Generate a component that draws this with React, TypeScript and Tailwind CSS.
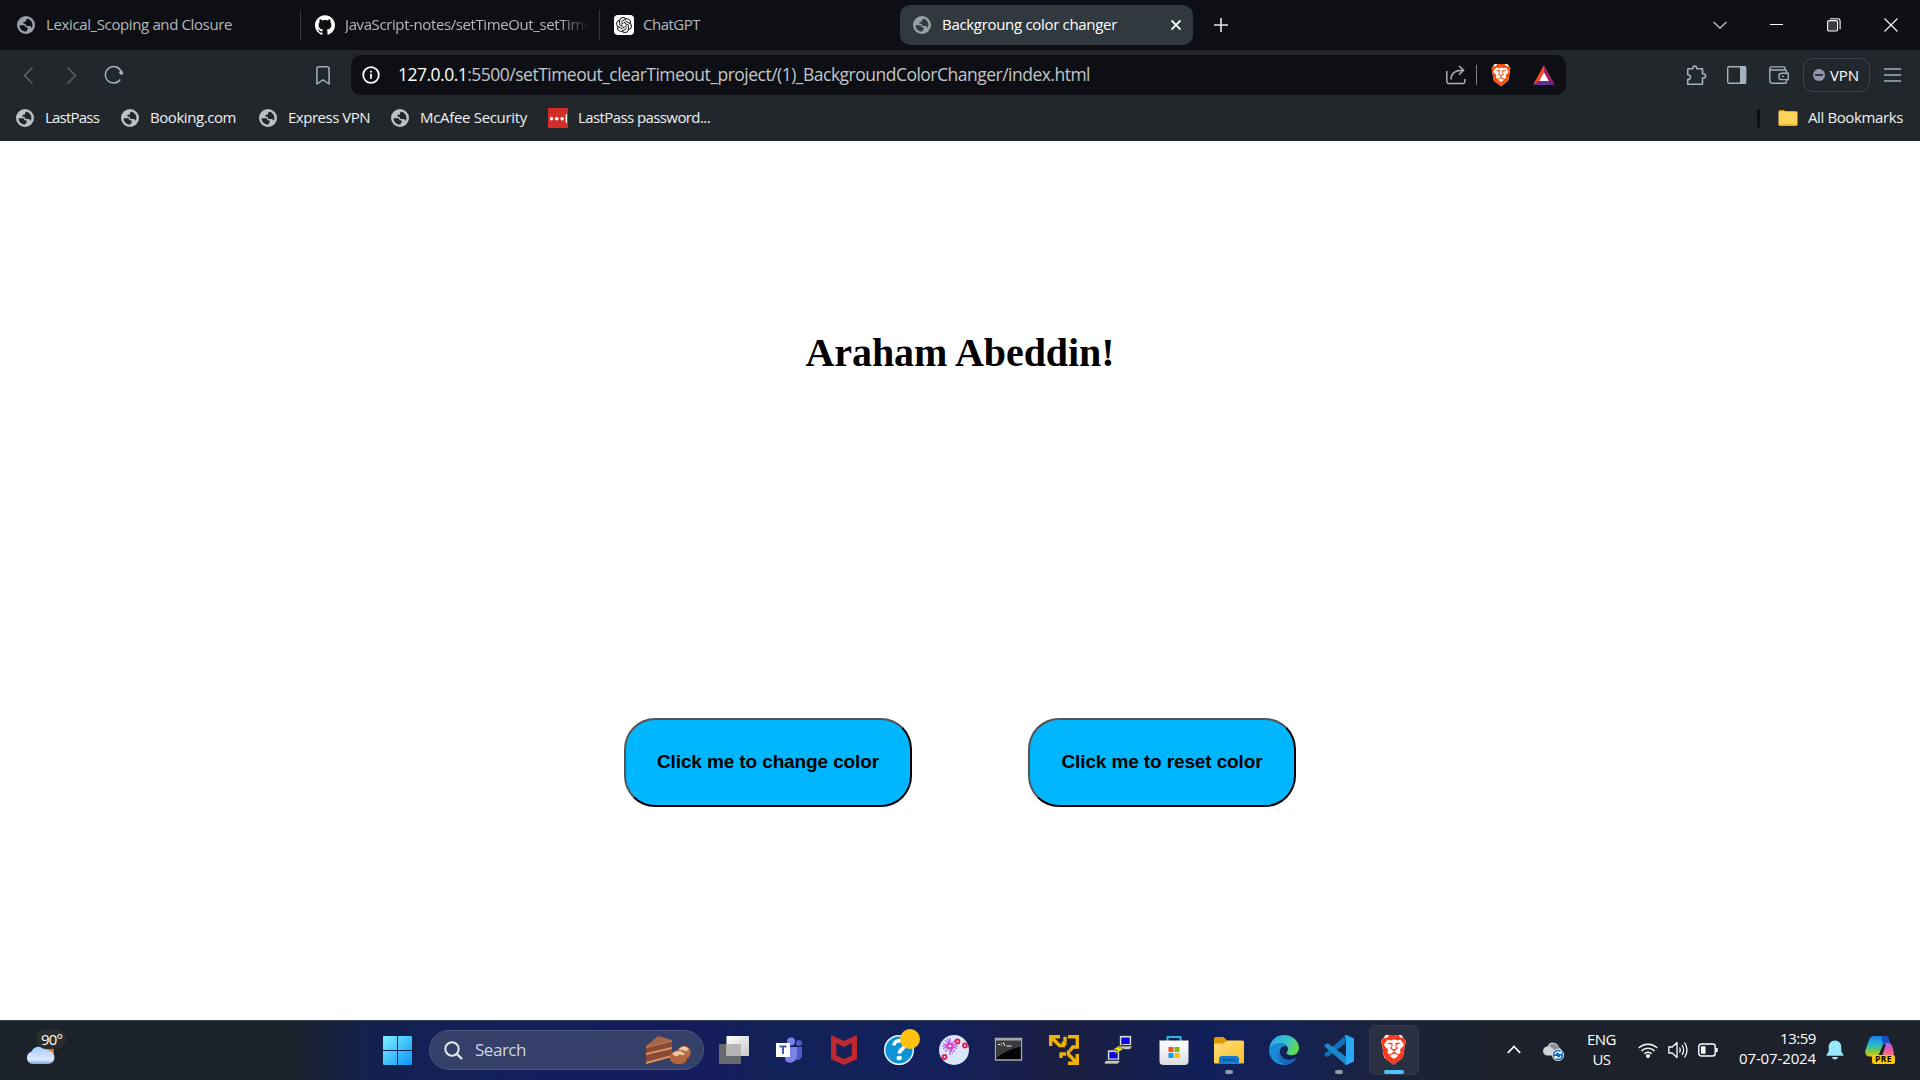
import { useLayoutEffect, useRef } from "react";
import type { ReactNode } from "react";
import { SiBrave, SiGithub, SiLastpass, SiMcafee, SiOpenai } from "react-icons/si";

/* Text set to an exact width by spreading the difference over its letters. */
function Fit({ w, className = "", children }: { w: number; className?: string; children: ReactNode }) {
  const ref = useRef<HTMLSpanElement>(null);
  useLayoutEffect(() => {
    const el = ref.current;
    if (!el) return;
    el.style.letterSpacing = "0px";
    const n = (el.textContent || "").length;
    const natural = el.getBoundingClientRect().width;
    el.style.letterSpacing = (w - natural) / n + "px";
  }, [w]);
  return (
    <span className={"block shrink-0 whitespace-nowrap " + className} style={{ width: w }}>
      <span ref={ref} className="inline-block">{children}</span>
    </span>
  );
}

function Globe({ className = "" }: { className?: string }) {
  return (
    <svg viewBox="0 0 18 18" className={"size-[18px] shrink-0 " + className}>
      <circle cx="9" cy="9" r="9" fill="currentColor" />
      <path
        className="fill-[#22272a]"
        transform="translate(.7 .7) scale(.92)"
        d="M2 9.2h4.6c1 0 1.7.7 1.7 1.6v.7h1.2c.8 0 1.4.6 1.4 1.4v.4c0 .7-.5 1.2-1.1 1.3l-.2 1.5C5.300 16.300 2 13.200 2 9.200zM10.600 2.200C13.700 2.800 16 5.600 16 9c0 1.200-.3 2.300-.8 3.200l-1-1.500c-.3-.5-.8-.7-1.300-.7H10.200c-.9 0-1.500-.6-1.500-1.400V7.700H7.300c-.7 0-1.200-.5-1.200-1.100 0-.7.5-1.100 1.200-1.100h.5c.7 0 1.200-.5 1.200-1.200 0-1 .7-1.800 1.600-2.100z"
      />
    </svg>
  );
}

function TabBar() {
  return (
    <div className="flex h-[50px] items-center bg-[#0d0f14] text-[15px] leading-[22px] text-[#b4b8bc]">
      <div className="flex w-[301px] items-center border-r border-[#35373b] pl-[17px] h-[30px]">
        <Globe className="text-[#9aa0a6] [&>path]:fill-[#0d0f14]" />
        <Fit w={186} className="ml-[11px] pb-[2px]">Lexical_Scoping and Closure</Fit>
      </div>
      <div className="flex h-[30px] w-[299px] items-center border-r border-[#35373b] pl-[14px]">
        <SiGithub className="size-5 shrink-0 text-white" />
        <div className="ml-[10px] w-[244px] overflow-hidden [mask-image:linear-gradient(to_right,black_88%,transparent)]">
          <Fit w={247} className="pb-[2px]">JavaScript-notes/setTimeOut_setTime</Fit>
        </div>
      </div>
      <div className="flex w-[300px] items-center pl-[14px]">
        <div className="flex size-5 items-center justify-center rounded bg-white">
          <SiOpenai className="size-4 text-[#202123]" />
        </div>
        <Fit w={57} className="ml-[9px] pb-[2px]">ChatGPT</Fit>
      </div>
      <div className="flex h-10 w-[293px] items-center rounded-[10px] bg-[#31383e] pl-[13px] text-white">
        <Globe className="text-[#9aa0a6] [&>path]:fill-[#31383e]" />
        <Fit w={175} className="ml-[11px] pb-[2px]">Backgroung color changer</Fit>
        <svg viewBox="0 0 10 10" className="ml-[54px] size-[10px]" stroke="white" strokeWidth="1.9">
          <path d="M.5.5l9 9M9.500.5l-9 9" />
        </svg>
      </div>
      <svg viewBox="0 0 14 14" className="ml-[21px] size-[14px]" stroke="#e3e5e8" strokeWidth="1.6">
        <path d="M7 0v14M0 7h14" />
      </svg>
      <div className="ml-auto flex items-center pr-[22px] pb-px">
        <svg viewBox="0 0 14 8" className="h-2 w-[14px]" fill="none" stroke="#d8dadc" strokeWidth="1.1"><path d="M.5.8L7 7.200l6.500-6.400" /></svg>
        <div className="ml-[43px] h-px w-[13px] bg-white" />
        <svg viewBox="0 0 14 14" className="ml-[44px] size-[14px]" fill="none" stroke="white" strokeWidth="1.1">
          <rect x=".6" y="2.600" width="10" height="10.400" rx="1.500" fill="#3a3c40" />
          <path d="M3 .7h7.500a2.600 2.600 0 012.600 2.600v8" />
        </svg>
        <svg viewBox="0 0 14 14" className="ml-[43px] size-[14px]" stroke="white" strokeWidth="1.100"><path d="M.5.5l13 13M13.500.5l-13 13" /></svg>
      </div>
    </div>
  );
}

function Toolbar() {
  return (
    <div className="flex h-[50px] items-center text-[#a3b2bc]">
      <svg viewBox="0 0 9 17" className="ml-[24px] h-[17px] w-[9px]" fill="none" stroke="#62696e" strokeWidth="1.3"><path d="M8.500.5l-8 8 8 8" /></svg>
      <svg viewBox="0 0 9 17" className="ml-[34px] h-[17px] w-[9px]" fill="none" stroke="#62696e" strokeWidth="1.300"><path d="M.5.5l8 8-8 8" /></svg>
      <svg viewBox="0 0 20 20" className="ml-[28px] size-5" fill="none" stroke="currentColor" strokeWidth="1.500">
        <path d="M17.300 7A8.200 8.200 0 1016.300 14.500" />
        <circle cx="17.200" cy="7.800" r="2" fill="currentColor" stroke="none" />
      </svg>
      <svg viewBox="0 0 14 19" className="ml-[192px] h-[19px] w-[14px]" fill="none" stroke="currentColor" strokeWidth="1.500" strokeLinejoin="round">
        <path d="M.9 3A2.200 2.200 0 013.100.8h7.800A2.200 2.200 0 0113.100 3v15L7 13.800.9 18z" />
      </svg>
      <div className="ml-[21px] flex h-10 w-[1215px] items-center rounded-[10px] bg-[#0d0f14]">
        <svg viewBox="0 0 18 18" className="ml-[11px] size-[18px]" fill="none" stroke="white" strokeWidth="1.800">
          <circle cx="9" cy="9" r="7.800" /><path d="M9 7.800v5M9 4.700v1.900" />
        </svg>
        <Fit w={692} className="ml-[18px] mr-px pb-px text-[17.5px] text-[#c3c6c9]">
          <span className="text-white">127.0.0.1</span>:5500/setTimeout_clearTimeout_project/(1)_BackgroundColorChanger/index.html
        </Fit>
        <svg viewBox="0 0 20 20" className="ml-[355px] size-5" fill="none" stroke="#a9afb3" strokeWidth="1.500">
          <path d="M.8 6v10.500a2 2 0 002 2h14a2 2 0 002-2V14M5 14.500C5 8.500 9 5.300 17 5.300M13 1l4.600 4.300-4.600 4.300" />
        </svg>
        <div className="ml-[10px] h-5 w-px bg-[#7d8286]" />
        <div className="ml-[14px] flex h-[23px] w-5 items-center justify-center bg-white [clip-path:polygon(20%_0,80%_0,97%_20%,86%_75%,50%_99%,14%_75%,3%_20%)]">
          <SiBrave className="h-[23px] w-[24px] shrink-0 text-[#fb4f0f]" />
        </div>
        <svg viewBox="0 0 22 20" className="ml-[22px] h-5 w-[22px]">
          <path d="M11 0L0 20l6.500-4L11 8z" fill="#ff4724" />
          <path d="M11 0l11 20-6.500-4L11 8z" fill="#9e1f63" />
          <path d="M0 20h22l-6.500-4h-9z" fill="#662d91" />
          <path d="M11 7.500L15.800 16H6.200z" fill="white" />
        </svg>
      </div>
      <svg viewBox="0 0 21 21" className="ml-[120px] size-[21px]" fill="none" stroke="currentColor" strokeWidth="1.600" strokeLinejoin="round">
        <path d="M2.200 3.700h4.600c0-3.600 4-3.600 4 0h5.700v5.100c4.200 0 4.200 4.200 0 4.200v6.200H1.700v-4.600c3.600.3 3.600-5.100 0-4.800V4.200z" />
      </svg>
      <svg viewBox="0 0 20 18" className="ml-[20px] h-[18px] w-5"><rect x=".7" y=".7" width="18" height="16.600" rx="1.500" fill="none" stroke="currentColor" strokeWidth="1.400" /><path d="M13 0h6v18h-6z" fill="currentColor" /></svg>
      <svg viewBox="0 0 20 18" className="ml-[22px] h-[18px] w-5" fill="none" stroke="currentColor" strokeWidth="1.400">
        <path d="M17.500 7V5.500a1.500 1.500 0 00-1.500-1.500H2.500C.3 4 .3.900 2.500.9H14.500a1.500 1.500 0 011.500 1.500V4M.8 2.500v12.700a2 2 0 002 2H16a1.500 1.500 0 001.500-1.500v-2M19.200 7.200H13a2 2 0 000 6.400h6.200zM13 10.400h2" />
      </svg>
      <div className="ml-[14px] flex h-[34px] w-[67px] items-center rounded-[10px] border border-[#3d474d] pl-[9px] text-white">
        <div className="flex size-3 items-center justify-center rounded-full bg-[#9497ae]"><div className="h-[1.500px] w-2 bg-[#30354a]" /></div>
        <Fit w={29} className="ml-[5px] text-[15px]">VPN</Fit>
      </div>
      <svg viewBox="0 0 17 14" className="ml-[14px] h-[14px] w-[17px]" stroke="currentColor" strokeWidth="1.300"><path d="M0 1h17M0 7h17M0 13h17" /></svg>
    </div>
  );
}

function BookmarksBar() {
  return (
    <div className="flex h-[41px] items-center pb-[5px] text-[15px] leading-5 text-[#eef0f1] [&>span]:pb-[2px]">
      <Globe className="ml-4 text-[#bdc1c6]" />
      <Fit w={54} className="ml-[11px]">LastPass</Fit>
      <Globe className="ml-[22px] text-[#bdc1c6]" />
      <Fit w={86} className="ml-[11px]">Booking.com</Fit>
      <Globe className="ml-[23px] text-[#bdc1c6]" />
      <Fit w={82} className="ml-[11px]">Express VPN</Fit>
      <Globe className="ml-[21px] text-[#bdc1c6]" />
      <Fit w={107} className="ml-[11px]">McAfee Security</Fit>
      <div className="ml-[21px] flex size-5 items-center justify-center bg-[#d32d27]"><SiLastpass className="size-[17px] text-white" stroke="white" strokeWidth="1" /></div>
      <Fit w={132} className="ml-[10px]">LastPass password...</Fit>
      <div className="ml-auto h-[19px] w-[3px] rounded-full bg-[#0d0f14]" />
      <svg viewBox="0 0 20 16" className="ml-[18px] h-4 w-5"><path d="M.5 1.500Q.5 0 2 0h4l2 2H.5z" fill="#d69a00" /><rect x=".5" y="1.300" width="19" height="14.500" rx="1.500" fill="#ffd35a" /><path d="M1 15h18" stroke="#eab22b" strokeWidth="1.500" /></svg>
      <Fit w={95} className="ml-[10px] mr-[17px]">All Bookmarks</Fit>
    </div>
  );
}

function Page() {
  return (
    <main className="flex h-[879px] flex-col items-center bg-white text-black">
      <h1 className="mt-[189px] font-['Liberation_Serif',serif] text-[40px] leading-[46px] font-bold">
        <Fit w={309}>Araham Abeddin!</Fit>
      </h1>
      <div className="mt-[342px] flex gap-[116px] font-['Liberation_Sans',sans-serif] text-[19px] font-bold">
        <button className="flex h-[89px] w-[288px] items-center justify-center rounded-[31px] border-2 border-black bg-[#00b7ff] [border-style:outset]">
          <Fit w={222}>Click me to change color</Fit>
        </button>
        <button className="flex h-[89px] w-[268px] items-center justify-center rounded-[31px] border-2 border-black bg-[#00b7ff] [border-style:outset]">
          <Fit w={201}>Click me to reset color</Fit>
        </button>
      </div>
    </main>
  );
}

function App30({ children }: { children: ReactNode }) {
  return <svg viewBox="0 0 30 30" className="size-[30px]">{children}</svg>;
}

function Slot({ children, mark = false }: { children: ReactNode; mark?: boolean }) {
  return (
    <div className="flex h-[60px] w-[55px] shrink-0 flex-col items-center pt-[15px]">
      {children}
      {mark && <div className="mt-[5px] h-1 w-2 rounded-full bg-[#9699a6]" />}
    </div>
  );
}

function Weather() {
  return (
    <div className="relative ml-[25px] h-[60px] w-[41px]">
      <svg viewBox="0 0 31 22" className="absolute top-[23px] left-0 h-[22px] w-[31px]">
        <defs><linearGradient id="cl" x2="0" y2="1"><stop stopColor="#a9c8fb" /><stop offset=".75" stopColor="#dbe9ff" /><stop offset="1" stopColor="#7fa3e8" /></linearGradient></defs>
        <circle cx="24" cy="8" r="5" fill="#f7730c" />
        <path d="M7 21a6.500 6.500 0 01-.5-12.500A8 8 0 0120 6.500a7 7 0 014.500 1.300A6.800 6.800 0 0124 21z" fill="url(#cl)" />
      </svg>
      <div className="absolute top-[9px] left-[11px] flex h-5 w-[30px] items-center rounded-full bg-[#2c2c2c] pl-[5px] text-[15px] leading-5 text-white">
        <Fit w={21}>90°</Fit>
      </div>
    </div>
  );
}

function Search() {
  return (
    <div className="mx-[2px] flex h-10 w-[275px] items-center rounded-full border border-[#4a5580] bg-[#354069]">
      <svg viewBox="0 0 19 19" className="ml-[14px] size-[19px]" fill="none" stroke="#e4e7ef" strokeWidth="2"><circle cx="8" cy="8" r="6.700" /><path d="M12.800 12.800l5.200 5.200" strokeWidth="2.400" /></svg>
      <Fit w={51} className="ml-[12px] text-[17px] text-[#cfd4e2]">Search</Fit>
      <svg viewBox="0 0 46 30" className="ml-[119px] h-[30px] w-[46px]">
        <path d="M1 11L13 1l14 4-26 7z" fill="#a8654a" />
        <path d="M1 11.500L27 5v17L1 29z" fill="#8a4a36" />
        <path d="M1 18l26-6v2L1 20zM1 27l26-7v2L1 29z" fill="#dc9367" />
        <path d="M1 11.500L27 5v1.500L1 13z" fill="#c07a58" />
        <circle cx="39" cy="17.500" r="6.800" fill="#b36c48" /><path d="M34 14q5-5 10 0l-3 2.500-3-1.500-3 1z" fill="#efc6a6" />
        <path d="M25 23a8.500 8 0 0117 0q0 6-8.500 6T25 23z" fill="#b4663f" /><path d="M27 19q6.500-6 13 0l-2 1.500-3-1-4 2-2-1.500z" fill="#f0c8a8" />
      </svg>
    </div>
  );
}

function Laptop({ x, y }: { x: number; y: number }) {
  return (
    <g transform={`translate(${x} ${y})`}>
      <path d="M3 0h12v10H3z" fill="#d9d9d9" stroke="#222" strokeWidth=".7" />
      <path d="M4.800 2h8.400v6.500H4.800z" fill="#0a0ae0" />
      <path d="M1.500 10.500H16L13.500 14H0v-1.500z" fill="#c9c9c9" stroke="#222" strokeWidth=".7" />
    </g>
  );
}

function Apps() {
  return (
    <>
      <Slot>
        <App30>
          <defs><linearGradient id="tv" x2="1" y2="1"><stop stopColor="#fff" /><stop offset="1" stopColor="#c8c8c8" /></linearGradient></defs>
          <path d="M0 9h22v20H0z" fill="#68696c" /><rect x="7.500" y="1" width="22.500" height="20" rx=".6" fill="url(#tv)" /><path d="M7.500 9H22v12H7.500z" fill="#b5b5b5" />
        </App30>
      </Slot>
      <Slot>
        <App30>
          <circle cx="17" cy="6.500" r="4" fill="#7b83eb" /><circle cx="25" cy="8" r="3" fill="#5059c9" />
          <path d="M19 12h9v8a4.500 4.500 0 01-9 1z" fill="#5059c9" /><path d="M10 12h13v9a7 7 0 01-11.500 5z" fill="#7b83eb" />
          <path d="M2 8h14v14H2z" fill="#fff" /><path d="M5.500 11.500h7M9 11.500v7.500" stroke="#4b53bc" strokeWidth="2" />
        </App30>
      </Slot>
      <Slot><SiMcafee className="h-[30px] w-[30px] text-[#c0282d]" /></Slot>
      <Slot>
        <svg viewBox="0 -6 36 36" className="-mt-[6px] ml-[6px] size-9">
          <circle cx="15" cy="15" r="14.300" fill="#0c95d6" stroke="#e8f5fc" strokeWidth="1.500" />
          <path d="M10 10.500c0-6.500 11-6.500 10.500 0-.3 4-5.200 3.500-5.200 8" fill="none" stroke="#fff" strokeWidth="3.600" /><ellipse cx="15.200" cy="23" rx="2.700" ry="2.200" fill="#fff" />
          <circle cx="26" cy="4" r="10" fill="#ffc20f" />
        </svg>
      </Slot>
      <Slot>
        <App30>
          <circle cx="15" cy="15" r="15" fill="#d9e6f8" />
          <path d="M11 3v17M3.500 11h15M6 5l10 12M16 5L6 17M8.500 3.500l5 15M4 8.500l14 5M4 13.500l14-5" stroke="#a42cf0" strokeWidth=".9" />
          <circle cx="11" cy="11" r="3.500" fill="#f03bb8" /><circle cx="11" cy="11" r="1.300" fill="#fff" />
          <g fill="#fff" stroke="#e01f52" strokeWidth="2"><circle cx="18.500" cy="6.500" r="1.900" /><circle cx="26" cy="10.500" r="1.900" /><circle cx="5.500" cy="22" r="1.900" /></g>
        </App30>
      </Slot>
      <Slot>
        <App30>
          <path d="M1.500 3.500h26v21.500h-26z" fill="#050505" stroke="#a4a8ad" strokeWidth="1.300" /><path d="M2 4h25v8Q15 13 2 23z" fill="#3c3c3f" /><path d="M2 4h25v1.500H2z" fill="#a4a8ad" />
          <path d="M4 9.500h2.200M7.500 8v.8M7.500 10v.8M9 7.500l2 3M12.500 11h5" stroke="#eee" strokeWidth="1.100" />
        </App30>
      </Slot>
      <Slot>
        <App30>
          <g fill="none" stroke="#edb20a" strokeWidth="3.400">
            <path d="M1.700 11V1.700H11M3 3l7.500 7.500h4V6.500M14.500 8.500h3" />
            <path d="M19 1.700h9.300V9M16 1.700v5M28.300 1.700V12h-4.500l-3 4" />
            <path d="M19 28.300h9.300V19M27 27l-7.500-7.500M19.500 15.500v5" />
            <path d="M17 19h-5v4" />
          </g>
        </App30>
      </Slot>
      <Slot>
        <App30>
          <Laptop x={12.5} y={0.5} /><Laptop x={0.5} y={15} />
          <path d="M19 9L8.500 14.500l5 .5L10.500 19.500 20 13.500l-5-.5z" fill="#f5f50a" stroke="#333" strokeWidth=".5" />
        </App30>
      </Slot>
      <Slot>
        <App30>
          <defs><linearGradient id="st" x2="0" y2="1"><stop stopColor="#fff" /><stop offset="1" stopColor="#dcdde0" /></linearGradient></defs>
          <path d="M8.500 7V2h13v5" fill="none" stroke="#2cb1f0" strokeWidth="2" />
          <path d="M.5 5.500h29V26a4 4 0 01-4 4h-21a4 4 0 01-4-4z" fill="url(#st)" />
          <path d="M9.500 12h5v5h-5z" fill="#f25022" /><path d="M15.500 12h5v5h-5z" fill="#7fba00" /><path d="M9.500 18h5v5h-5z" fill="#00a4ef" /><path d="M15.500 18h5v5h-5z" fill="#ffb900" />
        </App30>
      </Slot>
      <Slot mark>
        <App30>
          <defs><linearGradient id="fo" x2="1" y2="1"><stop stopColor="#ffdf7a" /><stop offset="1" stopColor="#fcbf28" /></linearGradient></defs>
          <path d="M0 4q0-2 2-2h7.500L13 5.500V10H0z" fill="#dc9a09" /><path d="M0 8.500h9.500L13 5.500h15.500A1.500 1.500 0 0130 7v20.500q0 1-1 1H1q-1 0-1-1z" fill="url(#fo)" />
          <path d="M5 28.500V24q0-3 3-3h14q3 0 3 3v4.500z" fill="#0f7ad0" /><path d="M8.500 25h13" stroke="#074f8e" strokeWidth="1.200" />
        </App30>
      </Slot>
      <Slot>
        <App30>
          <defs>
            <linearGradient id="e1" x1="0" y1=".2" x2="1" y2=".5"><stop stopColor="#2aa6e8" /><stop offset=".55" stopColor="#35c1cd" /><stop offset="1" stopColor="#62dc4c" /></linearGradient>
            <linearGradient id="e2" x2="0" y2="1"><stop stopColor="#1b7fcf" /><stop offset="1" stopColor="#1a5fb4" /></linearGradient>
          </defs>
          <path d="M.2 14C.8 6 7 0 15 0c9 0 15 6.500 15 12.800 0 4.500-3.200 7.400-7.200 7.400-3.500 0-5.300-1.200-5.300-2.300 0-.8 1.500-1.400 1.500-3.900C19 11 16 8.500 11.500 8.500 6 8.500 2 11 .2 14z" fill="url(#e1)" />
          <path d="M.1 14.500C1.500 10.500 6 8.300 11 8.500c3 .1 5 1 6.500 2.500-4-.5-6.700 2-6.700 5.500 0 5 4.200 8.500 9.200 8.500 3.500 0 6-1.200 7.500-2.500C25 27 20.500 30 15 30 6 30-.5 22.500.1 14.500z" fill="#1b8ad6" />
          <path d="M9 14.500c-3 8 3 15 9 15.200 4-.7 7.500-3.500 9.500-7.200-2 1.700-4.500 2.500-7.500 2.500-5 0-9.200-3.500-9.200-8.500 0-1 .2-2 .6-2.700z" fill="url(#e2)" />
        </App30>
      </Slot>
      <Slot mark>
        <App30>
          <path d="M22 0l-1 8.500L3.500 22 .5 20.500V19z" fill="#1272b6" /><path d="M.5 10L3.500 8 22 21.500V30L.5 11.500z" fill="#1b86cc" /><path d="M20.500.5L22.500 0 30 3.500v23L22.500 30l-2-.5q1.500-1 1.500-2.500V3q0-1.500-1.500-2.500z" fill="#2aa7f2" />
        </App30>
      </Slot>
      <div className="flex h-[60px] w-[55px] shrink-0 justify-center pt-[5px]">
        <div className="flex h-[50px] w-[50px] flex-col items-center rounded-md border border-[#33384c] bg-[#2a2f41] pt-[9px]">
          <div className="flex h-[30px] w-[26px] items-center justify-center bg-white [clip-path:polygon(20%_0,80%_0,97%_20%,86%_75%,50%_99%,14%_75%,3%_20%)]">
            <SiBrave className="size-[30px] shrink-0 text-[#fa3a1c]" />
          </div>
          <div className="mt-[5px] h-1 w-5 rounded-full bg-[#4cc2ff]" />
        </div>
      </div>
    </>
  );
}

function Tray() {
  return (
    <div className="ml-auto flex h-[60px] items-center pb-px text-[15px] leading-5 text-white">
      <svg viewBox="0 0 14 9" className="h-[9px] w-[14px]" fill="none" stroke="white" strokeWidth="1.800"><path d="M.8 8L7 1.500 13.200 8" /></svg>
      <svg viewBox="0 0 21 19" className="mt-[4px] ml-[22px] h-[19px] w-[21px]">
        <path d="M4.500 13.500a4.500 4.500 0 010-9A6 6 0 0116 5.500a4.500 4.500 0 01.500 8z" fill="#d0d2d5" /><path d="M6 3.500a6 6 0 0110 2l.5 3-4 .5z" fill="#8d9094" />
        <circle cx="15" cy="13" r="5.700" fill="#1067b8" stroke="#fff" strokeWidth=".8" />
        <path d="M11.800 12.500a3.300 3.300 0 016-1.200M18.200 13.500a3.300 3.300 0 01-6 1.200M18 9v2.400h-2.400M12 17v-2.400h2.400" fill="none" stroke="#fff" strokeWidth="1.200" />
      </svg>
      <div className="ml-[23px] flex flex-col items-center pb-px">
        <Fit w={29}>ENG</Fit><Fit w={18}>US</Fit>
      </div>
      <svg viewBox="0 0 20 16" className="ml-[22px] h-4 w-5" fill="none" stroke="white" strokeWidth="1.500">
        <path d="M.8 6a13 13 0 0118.400 0" /><path d="M3.500 9a9.200 9.200 0 0113 0" /><path d="M6.300 11.800a5.200 5.200 0 017.400 0" /><circle cx="10" cy="14" r="1.300" fill="white" />
      </svg>
      <svg viewBox="0 0 20 18" className="ml-[10px] h-[18px] w-5" fill="none" stroke="white" strokeWidth="1.300">
        <path d="M.8 6h3.400l4.800-4.500v15L4.200 12H.8z" strokeLinejoin="round" /><path d="M11.500 6.500q1.500 2.500 0 5M14 4q3.300 5 0 10M16.500 1.500q5 7.500 0 15" />
      </svg>
      <svg viewBox="0 0 20 14" className="ml-[10px] h-[14px] w-5" fill="none" stroke="white" strokeWidth="1.400">
        <rect x=".8" y="1" width="16.400" height="12" rx="2.500" /><path d="M3 3.300h4.500v7.400H3z" fill="white" stroke="none" /><path d="M18.800 5v4" strokeWidth="1.800" />
      </svg>
      <div className="ml-[21px] flex flex-col items-end pb-[3px]">
        <Fit w={36}>13:59</Fit><Fit w={77}>07-07-2024</Fit>
      </div>
      <svg viewBox="0 0 18 20" className="ml-[10px] h-5 w-[18px]" fill="#97e7fd"><path d="M9 .5c4 0 6.300 3 6.300 6.500v4.500L17.500 15v.8H.5V15l2.200-3.500V7C2.700 3.500 5 .5 9 .5zM6 17h6q-.5 2.500-3 2.500T6 17z" /></svg>
      <div className="relative mr-[24px] ml-[21px] h-[30px] w-[31px]">
        <svg viewBox="0 0 30 30" className="size-[30px]">
          <defs>
            <linearGradient id="c1" x2="0" y2="1"><stop stopColor="#1b7de8" /><stop offset=".4" stopColor="#22b5d6" /><stop offset=".75" stopColor="#7bc83c" /><stop offset="1" stopColor="#f0c31c" /></linearGradient>
            <linearGradient id="c2" x2="0" y2="1"><stop stopColor="#a55cf5" /><stop offset=".5" stopColor="#ee5a9d" /><stop offset="1" stopColor="#fb8a4c" /></linearGradient>
          </defs>
          <path d="M20 8h3.500c2 0 3 1 3.800 3.500.8 2.700 1.500 4 1.500 6.500 0 3-3 5-6 5H13l3-4z" fill="url(#c2)" />
          <path d="M9 1h11c2 0 3 1 3.500 2.500L25 8h-4c-2 0-3 1-3.500 3L15 18c-.7 2-1.500 3.500-4 3.500H5c-4 0-5.500-3-4.500-6.500L4 5c1-3 2.500-4 5-4z" fill="url(#c1)" />
          <path d="M20 1q2.500 0 3.500 2.500L25 8h-4q-2 0-3 2l-2-9z" fill="#1a4fc4" />
          <path d="M18.500 9.500L21 9l-3.500 11h-4z" fill="#1c222c" />
        </svg>
        <div className="absolute top-[20px] left-[7px] flex h-[9px] w-[23px] items-center justify-center rounded-[2px] bg-[#ffc60a] text-[8.500px] leading-none font-bold text-black">
          <Fit w={17}>PRE</Fit>
        </div>
      </div>
    </div>
  );
}

function Taskbar() {
  return (
    <footer className="h-[60px] bg-[linear-gradient(90deg,#1c222a_0px,#1b222c_290px,#13214f_375px,#12205a_500px,#151b5c_690px,#122258_780px,#13205a_950px,#1b1e40_1060px,#161f4a_1130px,#11205a_1210px,#132155_1290px,#1c2237_1400px,#1c212c_1500px,#1c212b_1920px)]">
      <div className="flex h-[60px] items-center shadow-[inset_0_1px_0_#3a4450]">
        <Weather />
        <div className="ml-[303px] flex items-center">
          <div className="flex w-[58px] pl-[14px]">
            <svg viewBox="0 0 29 29" className="size-[29px]">
              <defs><linearGradient id="w" gradientUnits="userSpaceOnUse" x2="29" y2="29"><stop stopColor="#7cf3ff" /><stop offset="1" stopColor="#0a94f7" /></linearGradient></defs>
              <path d="M0 1q0-1 1-1h13v14H0zM15 0h13q1 0 1 1v13H15zM0 15h14v14H1q-1 0-1-1zM15 15h14v13q0 1-1 1H15z" fill="url(#w)" />
            </svg>
          </div>
          <Search />
          <Apps />
        </div>
        <Tray />
      </div>
    </footer>
  );
}

export default function App() {
  return (
    <div className="flex h-[1080px] w-[1920px] flex-col overflow-hidden font-['Open_Sans',sans-serif]">
      <TabBar />
      <div className="bg-[#22272b]">
        <Toolbar />
        <BookmarksBar />
      </div>
      <Page />
      <Taskbar />
    </div>
  );
}
